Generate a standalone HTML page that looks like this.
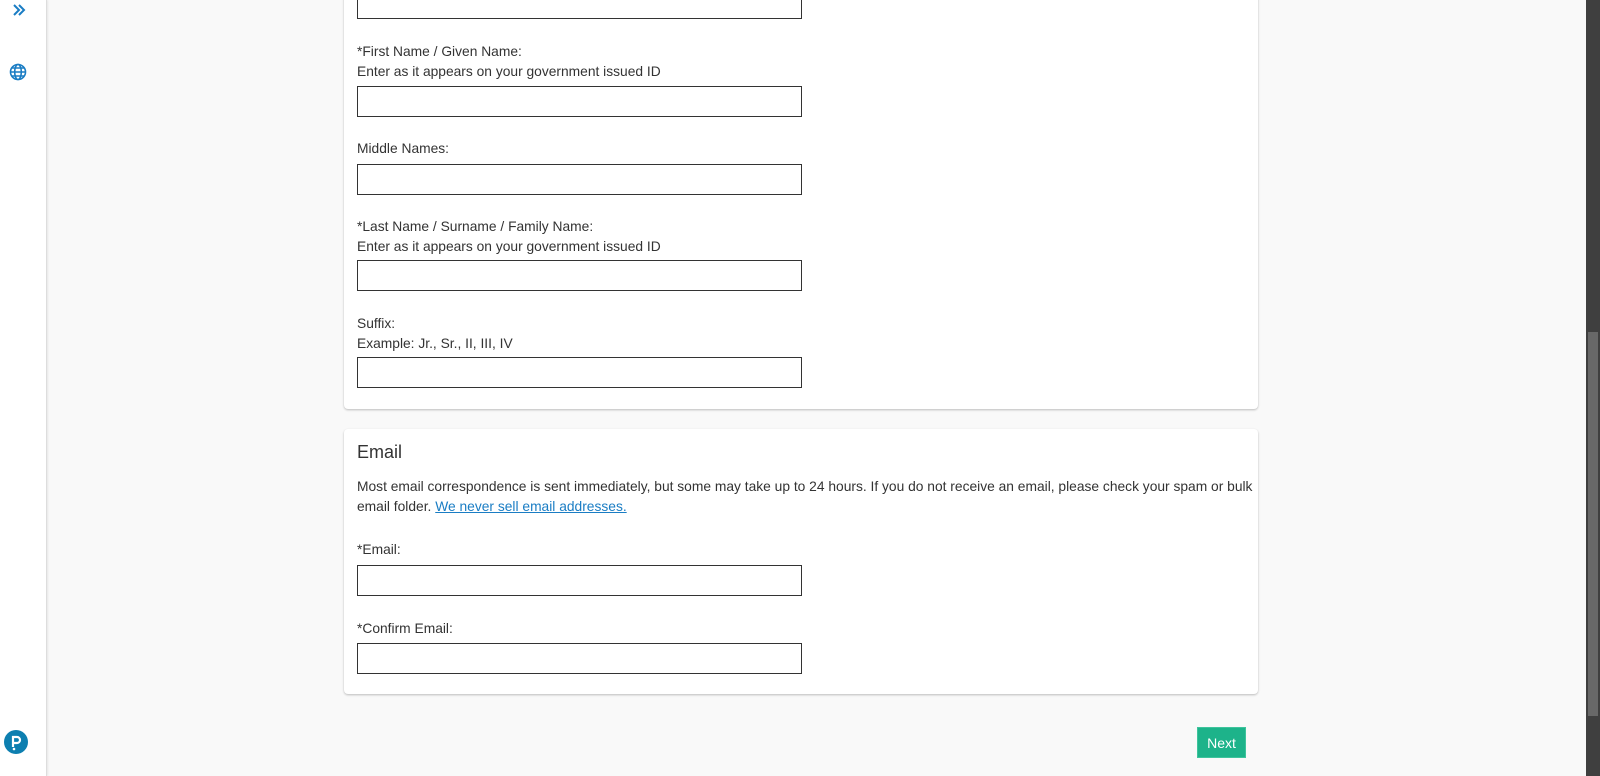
<!DOCTYPE html>
<html><head><meta charset="utf-8"><style>
*{margin:0;padding:0;box-sizing:border-box}
body{width:1600px;height:776px;overflow:hidden;background:#f9f9f9;font-family:"Liberation Sans",Arial,sans-serif;font-size:13.8px;color:#333;position:relative}
.side{position:absolute;left:0;top:0;width:47px;height:776px;background:#fff;border-right:1px solid #ddd;box-shadow:1px 0 2px rgba(0,0,0,.08)}
.card{position:absolute;left:344px;width:914px;background:#fff;border-radius:4px;box-shadow:0 1px 2px rgba(0,0,0,.25)}
.t{position:absolute;left:357px;line-height:20px;color:#333}
.in{position:absolute;left:357px;width:445px;height:31px;border:1px solid #333;background:#fff}
.sb{position:absolute;right:0;top:0;width:14px;height:776px;background:#3f3f3f}
.th{position:absolute;right:2px;top:332px;width:10px;height:384px;background:#686868}
.btn{position:absolute;left:1197px;top:727px;width:49px;height:31px;background:#1db38a;color:#fff;font-size:14px;line-height:31px;text-align:center;border:1px solid #3ec49c}
a{color:#1a7dc4}
</style></head><body>
<div class="side">
<svg style="position:absolute;left:12px;top:3px" width="14" height="14" viewBox="0 0 14 14"><path d="M2 2l5 5-5 5M7 2l5 5-5 5" fill="none" stroke="#1a7dc4" stroke-width="2"/></svg>
<svg style="position:absolute;left:9px;top:63px" width="18" height="18" viewBox="0 0 18 18" fill="none" stroke="#1a7dc4" stroke-width="1.6"><circle cx="9" cy="9" r="7.5"/><ellipse cx="9" cy="9" rx="3.3" ry="7.5"/><path d="M1.5 9h15M3 5h12M3 13h12"/></svg>
<svg style="position:absolute;left:4px;top:730px" width="24" height="24" viewBox="0 0 24 24"><circle cx="12" cy="12" r="12" fill="#0d7fb0"/><path d="M9 17V7h4a3 3 0 010 6h-3" fill="none" stroke="#fff" stroke-width="2.2"/><circle cx="10" cy="19" r="1.3" fill="#fff"/></svg>
</div>
<div class="card" style="top:-10px;height:419px"></div>
<div class="in" style="top:-12px"></div>
<div class="t" style="top:42px">*First Name / Given Name:<br>Enter as it appears on your government issued ID</div>
<div class="in" style="top:86px"></div>
<div class="t" style="top:139px">Middle Names:</div>
<div class="in" style="top:164px"></div>
<div class="t" style="top:217px">*Last Name / Surname / Family Name:<br>Enter as it appears on your government issued ID</div>
<div class="in" style="top:260px"></div>
<div class="t" style="top:314px">Suffix:<br>Example: Jr., Sr., II, III, IV</div>
<div class="in" style="top:357px"></div>
<div class="card" style="top:429px;height:265px"></div>
<div class="t" style="top:441px;font-size:18px;line-height:22px">Email</div>
<div class="t" style="top:477px;width:900px">Most email correspondence is sent immediately, but some may take up to 24 hours. If you do not receive an email, please check your spam or bulk email folder. <a href="#">We never sell email addresses.</a></div>
<div class="t" style="top:540px">*Email:</div>
<div class="in" style="top:565px"></div>
<div class="t" style="top:619px">*Confirm Email:</div>
<div class="in" style="top:643px"></div>
<div class="btn">Next</div>
<div class="sb"><div class="th"></div></div>
</body></html>
